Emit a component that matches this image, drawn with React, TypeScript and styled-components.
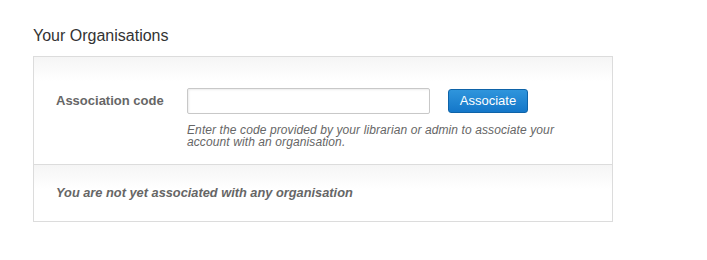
import * as React from 'react';
import styled, { createGlobalStyle } from 'styled-components';

const GlobalStyle = createGlobalStyle`
  body {
    margin: 0;
    background: #ffffff;
    font-family: "Liberation Sans", Arial, sans-serif;
  }
`;

export default function App() {
  return (
    <>
      <GlobalStyle />
      <Page>
        <Title>Your Organisations</Title>
        <Panel>
          <Section $tall>
            <FormRow>
              <Label>Association code</Label>
              <Field>
                <InputRow>
                  <CodeInput type="text" />
                  <Button>Associate</Button>
                </InputRow>
                <Help>
                  Enter the code provided by your librarian or admin to associate your
                  <br />
                  account with an organisation.
                </Help>
              </Field>
            </FormRow>
          </Section>
          <Section>
            <Empty>You are not yet associated with any organisation</Empty>
          </Section>
        </Panel>
      </Page>
    </>
  );
}

const Page = styled.div`
  padding: 27px 0 0 33px;
  width: 580px;
`;

const Title = styled.h3`
  margin: 0 0 11px 0;
  font-size: 16px;
  font-weight: normal;
  color: #333;
  line-height: 18px;
`;

const Panel = styled.div`
  border: 1px solid #dcdcdc;
  background: #fff;
`;

const Section = styled.div<{ $tall?: boolean }>`
  background: linear-gradient(to bottom, #f5f5f5 0px, #ffffff 24px);
  padding: ${(p) => (p.$tall ? '31px 22px 16px 22px' : '20px 22px 20px 22px')};
  & + & {
    border-top: 1px solid #dcdcdc;
  }
`;

const FormRow = styled.div`
  display: flex;
  align-items: flex-start;
`;

const Label = styled.div`
  width: 131px;
  padding-top: 6px;
  font-size: 13px;
  font-weight: bold;
  color: #666;
  line-height: 14px;
`;

const Field = styled.div`
  display: flex;
  flex-direction: column;
`;

const InputRow = styled.div`
  display: flex;
  align-items: center;
`;

const CodeInput = styled.input`
  box-sizing: border-box;
  width: 243px;
  height: 26px;
  margin: 0 18px 0 0;
  border: 1px solid #c8c8c8;
  border-radius: 2px;
  box-shadow: inset 1px 1px 2px rgba(0, 0, 0, 0.08);
  padding: 3px 5px;
  font-family: inherit;
  font-size: 12px;
  outline: none;
`;

const Button = styled.button`
  box-sizing: border-box;
  width: 80px;
  height: 24px;
  padding: 0;
  border: 1px solid #0e63a8;
  border-radius: 3px;
  background: linear-gradient(to bottom, #2f95dc 0%, #1477c9 100%);
  color: #fff;
  font-family: inherit;
  font-size: 13px;
  line-height: 20px;
  cursor: pointer;
`;

const Help = styled.div`
  margin-top: 10px;
  font-size: 12px;
  font-style: italic;
  color: #666;
  line-height: 12px;
  letter-spacing: 0.1px;
`;

const Empty = styled.div`
  font-size: 12.8px;
  font-weight: bold;
  font-style: italic;
  color: #666;
  line-height: 16px;
`;
